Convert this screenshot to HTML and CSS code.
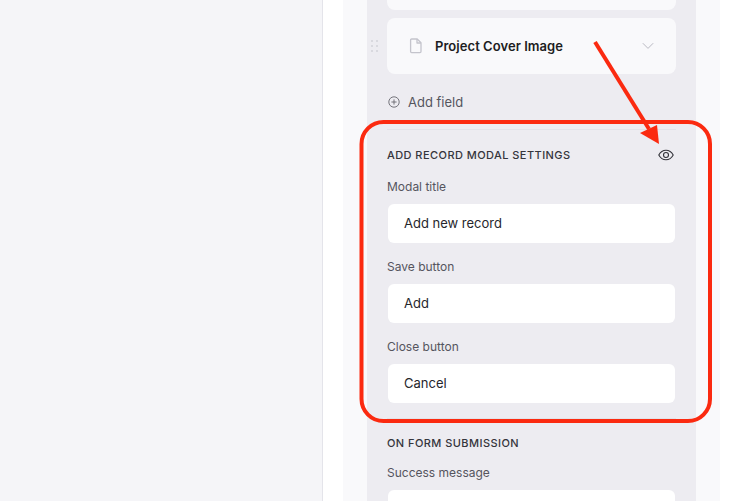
FILE: index.html
```html
<!DOCTYPE html>
<html lang="en">
<head>
<meta charset="utf-8">
<title>Form settings</title>
<link rel="stylesheet" href="styles.css">
</head>
<body>
<div class="page">
  <aside class="left"></aside>
  <main class="outer">
    <section class="inner">
      <div class="card card-cut"></div>
      <div class="row-wrap">
        <svg class="grip" width="8" height="14" viewBox="0 0 8 14"><g fill="#d9d9df"><rect x="0" y="1" width="2" height="2"/><rect x="5" y="1" width="2" height="2"/><rect x="0" y="6" width="2" height="2"/><rect x="5" y="6" width="2" height="2"/><rect x="0" y="11" width="2" height="2"/><rect x="5" y="11" width="2" height="2"/></g></svg>
        <div class="card card-field">
          <svg class="doc" width="14" height="16" viewBox="0 0 14 16" fill="none" stroke="#c4c4cc" stroke-width="1.300" stroke-linejoin="round"><path d="M2.6 1h5.6L12 4.8V13.6a1 1 0 0 1-1 1H2.6a1 1 0 0 1-1-1V2a1 1 0 0 1 1-1z"/><path d="M8 1v4h4"/></svg>
          <span class="field-name">Project Cover Image</span>
          <svg class="chev" width="12" height="8" viewBox="0 0 12 8" fill="none" stroke="#b9b9c2" stroke-width="1"><path d="M.8 1.2 6 6.4l5.2-5.2"/></svg>
        </div>
      </div>
      <div class="add-field">
        <svg width="12" height="12" viewBox="0 0 12 12" fill="none" stroke="#66666e" stroke-width="0.900"><circle cx="6" cy="6" r="5.200"/><path d="M6 3.400v5.200M3.400 6h5.200"/></svg>
        <span>Add field</span>
      </div>
      <hr class="rule">
      <div class="heading-row">
        <h2 class="heading">ADD RECORD MODAL SETTINGS</h2>
        <svg width="16" height="12" viewBox="0 0 16 12" fill="none" stroke="#33333a" stroke-width="1.100"><path d="M.8 6C2.400 3 5 1.200 8 1.200S13.600 3 15.200 6c-1.600 3-4.200 4.800-7.200 4.800S2.400 9 .8 6z"/><circle cx="8" cy="6" r="2.500"/></svg>
      </div>
      <label class="label">Modal title</label>
      <div class="input">Add new record</div>
      <label class="label">Save button</label>
      <div class="input">Add</div>
      <label class="label">Close button</label>
      <div class="input">Cancel</div>
      <hr class="rule rule-two">
      <h2 class="heading heading-two">ON FORM SUBMISSION</h2>
      <label class="label">Success message</label>
      <div class="input"></div>
    </section>
  </main>
</div>
<svg class="annotation" width="739" height="501" viewBox="0 0 739 501" fill="none">
  <rect x="361.500" y="122" width="348.500" height="299" rx="22" stroke="#fb2a10" stroke-width="4"/>
  <path d="M595 42 649 129" stroke="#fb2a10" stroke-width="4"/>
  <path d="M659 144 657 125 640 133z" fill="#fb2a10"/>
</svg>
</body>
</html>
```
FILE: styles.css
```css
* { box-sizing: border-box; }
html, body {
  margin: 0;
  height: 501px;
  overflow: hidden;
  background: #fff;
  font-family: Inter, "Liberation Sans", sans-serif;
}
.page {
  display: flex;
  width: 739px;
  height: 501px;
  overflow: hidden;
}
.left {
  width: 323px;
  flex: none;
  background: #f5f5f8;
  border-right: 1px solid #e4e4ea;
}
.outer {
  width: 377px;
  flex: none;
  margin-left: 20px;
  padding: 0 24px;
  background: #f9f9fb;
}
.inner {
  height: 501px;
  padding: 0 20px;
  background: #edecf1;
  overflow: hidden;
}
.card {
  background: #f9f9fb;
  border-radius: 8px;
}
.card-cut {
  height: 10px;
  border-radius: 0 0 8px 8px;
}
.row-wrap {
  position: relative;
  margin-top: 8px;
}
.grip {
  position: absolute;
  left: -16px;
  top: 21px;
}
.card-field {
  display: flex;
  align-items: center;
  height: 56px;
  padding: 0 22px;
}
.doc { flex: none; }
.field-name {
  margin-left: 12px;
  font-size: 13px;
  font-weight: 600;
  letter-spacing: 0.05px;
  color: #1d1d22;
}
.chev { margin-left: auto; }
.add-field {
  display: flex;
  align-items: center;
  gap: 8px;
  height: 20px;
  margin-top: 18px;
  padding-left: 1px;
  font-size: 13px;
  color: #55555e;
}
.rule {
  height: 1px;
  margin: 17px 0 0;
  border: 0;
  background: #e2e2e8;
}
.heading-row {
  display: flex;
  align-items: center;
  justify-content: space-between;
  height: 16px;
  margin-top: 17px;
  padding-right: 2px;
}
.heading {
  margin: 0;
  font-size: 11px;
  line-height: 16px;
  font-weight: 500;
  letter-spacing: 0.44px;
  color: #35353c;
}
.label {
  display: block;
  margin-top: 16px;
  font-size: 12px;
  line-height: 16px;
  font-weight: 400;
  color: #55555e;
}
.input {
  width: 287px;
  height: 39px;
  margin: 9px 0 0 1px;
  padding: 0 16px;
  border-radius: 6px;
  background: #fff;
  font-size: 13px;
  line-height: 39px;
  color: #26262c;
}
.rule-two { margin-top: 15px; }
.heading-two { margin-top: 16px; }
.heading-two + .label { margin-top: 14px; }
.annotation {
  position: absolute;
  left: 0;
  top: 0;
  pointer-events: none;
}
```
